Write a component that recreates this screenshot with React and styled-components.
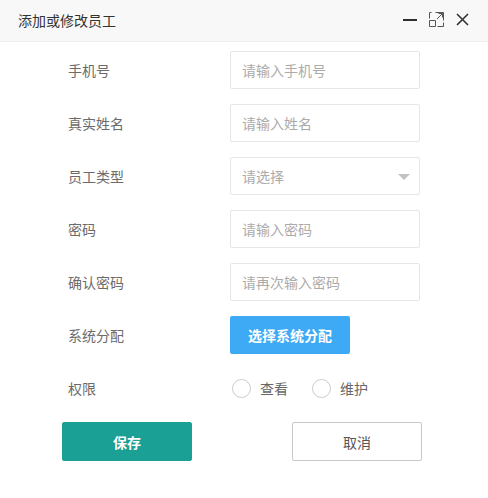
import styled, { createGlobalStyle } from "styled-components";

const GlobalStyle = createGlobalStyle`
    html, body {
        margin: 0;
        padding: 0;
        background: #ffffff;
    }
    body {
        font-family: "Noto Sans CJK SC", "Noto Sans", sans-serif;
    }
`

const fields = [
    { label: "手机号", placeholder: "请输入手机号" },
    { label: "真实姓名", placeholder: "请输入姓名" },
    { label: "员工类型", placeholder: "请选择", select: true },
    { label: "密码", placeholder: "请输入密码" },
    { label: "确认密码", placeholder: "请再次输入密码" },
];

export default function App(){
    return (
        <Layer>
            <GlobalStyle />
            <Header>
                <Title>添加或修改员工</Title>
                <Tools>
                    <svg width="14" height="14" viewBox="0 0 14 14">
                        <rect x="0" y="6" width="14" height="2" fill="#2f2f2f" />
                    </svg>
                    <svg width="15" height="15" viewBox="0 0 15 15" fill="none" stroke="#555" strokeWidth="1">
                        <path d="M6.5 0.5 H14.5 V8.5" />
                        <path d="M0.5 8.5 V14.5 H6.5 V8.5 Z" />
                        <path d="M0.5 6.5 V0.5 H2.5" />
                        <path d="M14.5 10.5 V14.5 H8.5" />
                        <path d="M8 7 L13.5 1.5 M9.5 1.5 H13.5 V5.5" />
                    </svg>
                    <svg width="13" height="13" viewBox="0 0 13 13" stroke="#333" strokeWidth="1.6">
                        <path d="M1 1 L12 12 M12 1 L1 12" />
                    </svg>
                </Tools>
            </Header>

            <Form>
                {fields.map(f => (
                    <Row key={f.label}>
                        <Label>{f.label}</Label>
                        <Input>
                            <Placeholder>{f.placeholder}</Placeholder>
                            {f.select && <Caret />}
                        </Input>
                    </Row>
                ))}

                <Row>
                    <Label>系统分配</Label>
                    <BlueButton>选择系统分配</BlueButton>
                </Row>

                <Row>
                    <Label>权限</Label>
                    <Radios>
                        <Radio><Circle />查看</Radio>
                        <Radio><Circle />维护</Radio>
                    </Radios>
                </Row>

                <Actions>
                    <ActionButton primary>保存</ActionButton>
                    <ActionButton>取消</ActionButton>
                </Actions>
            </Form>
        </Layer>
    );
}

const Layer = styled.div`
    width: 488px;
    height: 498px;
    background: #ffffff;
`
const Header = styled.div`
    display: flex;
    align-items: center;
    justify-content: space-between;
    height: 41px;
    padding: 0 18px;
    background: #f8f8f8;
    border-bottom: 1px solid #eeeeee;
`
const Title = styled.span`
    font-size: 14px;
    color: #333333;
    margin-top: -2px;
`
const Tools = styled.div`
    display: flex;
    align-items: center;
    gap: 12px;
    margin-right: 1px;
    margin-top: -2px;
`
const Form = styled.div`
    display: flex;
    flex-direction: column;
    gap: 15px;
    padding: 9px 0 0 68px;
`
const Row = styled.div`
    display: flex;
    align-items: center;
    height: 38px;
`
const Label = styled.span`
    width: 162px;
    font-size: 14px;
    color: #6b6b6b;
`
const Input = styled.div`
    position: relative;
    display: flex;
    align-items: center;
    box-sizing: border-box;
    width: 190px;
    height: 38px;
    padding: 0 11px;
    border: 1px solid #e6e6e6;
    border-radius: 2px;
`
const Placeholder = styled.span`
    font-size: 14px;
    color: #ababab;
`
const Caret = styled.span`
    position: absolute;
    right: 9px;
    top: 16px;
    width: 0;
    height: 0;
    border-left: 6px solid transparent;
    border-right: 6px solid transparent;
    border-top: 6px solid #c2c2c2;
`
const BlueButton = styled.button`
    width: 120px;
    height: 38px;
    border: none;
    border-radius: 2px;
    background: #3ea9f5;
    color: #ffffff;
    font-family: inherit;
    font-size: 14px;
    font-weight: 700;
    padding: 0;
`
const Radios = styled.div`
    display: flex;
    align-items: center;
    gap: 24px;
    padding-left: 2px;
`
const Radio = styled.label`
    display: flex;
    align-items: center;
    gap: 9px;
    font-size: 14px;
    color: #666666;
`
const Circle = styled.span`
    box-sizing: border-box;
    width: 19px;
    height: 19px;
    border-radius: 50%;
    border: 1.5px solid #cccccc;
`
const Actions = styled.div`
    display: flex;
    justify-content: space-between;
    width: 360px;
    margin-left: -6px;
`
const ActionButton = styled.button`
    box-sizing: border-box;
    width: 130px;
    height: 39px;
    padding: 0;
    border-radius: 2px;
    border: 1px solid ${props => props.primary ? "#1aa094" : "#c9c9c9"};
    background: ${props => props.primary ? "#1aa094" : "#ffffff"};
    color: ${props => props.primary ? "#ffffff" : "#555555"};
    font-family: inherit;
    font-size: 14px;
    font-weight: ${props => props.primary ? 700 : 400};
`
